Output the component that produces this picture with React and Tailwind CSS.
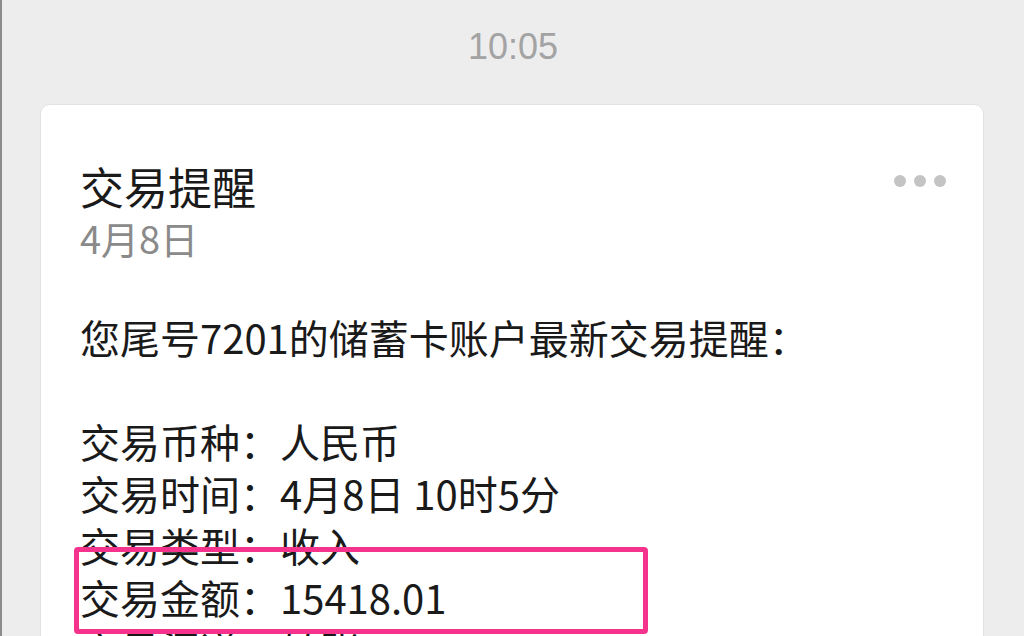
export default function App() {
  const rows = [
    ["交易币种：", "人民币"],
    ["交易时间：", "4月8日 10时5分"],
    ["交易类型：", "收入"],
    ["交易金额：", "15418.01"],
    ["交易渠道：", "转账"],
  ];
  return (
    <div className="h-[636px] w-[1024px] overflow-hidden bg-[#ededed] border-l-2 border-[#8c8c8c] flex flex-col">
      <div
        className="pt-[27px] text-center text-[36px] leading-[40px] text-[#a3a3a3]"
        style={{ fontFamily: '"Liberation Sans", Arial, sans-serif' }}
      >
        10:05
      </div>
      <div
        className="relative mt-[37px] ml-[38px] mr-[40px] flex-1 rounded-t-[10px] border border-[#e2e2e2] bg-white pl-[39px] pr-[37px] pt-[55px] text-[#1a1a1a]"
        style={{ fontFamily: '"Noto Sans CJK SC", "Noto Sans", sans-serif' }}
      >
        <div className="flex items-start justify-between">
          <div className="text-[44px] leading-[52px]">交易提醒</div>
          <div className="mt-[15px] flex gap-[8px]">
            <span className="h-[12px] w-[12px] rounded-full bg-[#c4c4c4]" />
            <span className="h-[12px] w-[12px] rounded-full bg-[#c4c4c4]" />
            <span className="h-[12px] w-[12px] rounded-full bg-[#c4c4c4]" />
          </div>
        </div>
        <div className="text-[38px] leading-[52px] text-[#8a8a8a]">4月8日</div>
        <div className="mt-[47px] text-[40px] leading-[52px]">
          <div>您尾号7201的储蓄卡账户最新交易提醒：</div>
          <div className="h-[52px]" />
          {rows.map(([k, v]) => (
            <div key={k} className="flex">
              <span className="w-[200px]">{k}</span>
              <span>{v}</span>
            </div>
          ))}
        </div>
        <div className="absolute left-[33px] top-[442px] h-[87px] w-[574px] rounded-[4px] border-[5px] border-[#f5338d]" />
      </div>
    </div>
  );
}
